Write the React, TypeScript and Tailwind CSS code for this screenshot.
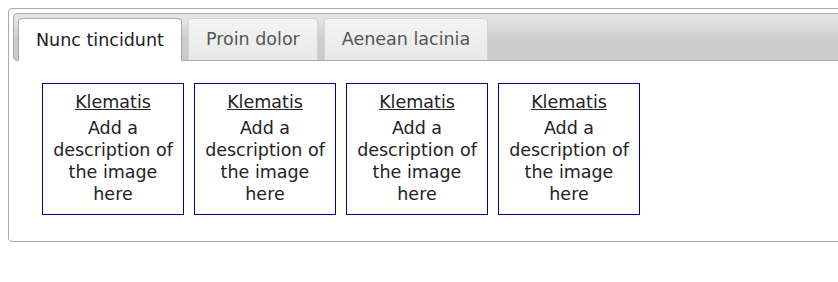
const tabs = ["Nunc tincidunt", "Proin dolor", "Aenean lacinia"]

function Card() {
  return (
    <div className="w-[142px] h-[132px] border border-[#00009c] flex flex-col items-center pt-[7px] text-center leading-[22px] text-[17.5px] text-[#222]">
      <a className="underline text-[#222] leading-[22px] mb-[4px]">Klematis</a>
      <p className="px-[6px]">Add a description of the image here</p>
    </div>
  )
}

export default function App() {
  return (
    <div className="w-[838px] h-[282px] overflow-hidden bg-white" style={{ fontFamily: '"DejaVu Sans", Verdana, sans-serif' }}>
      <div className="ml-[8px] mt-[8px] w-[900px] h-[234px] border border-[#aaaaaa] rounded-[4px] p-[4px]">
        <div className="h-[48px] border border-[#aaaaaa] rounded-[4px] bg-gradient-to-b from-[#e4e4e4] from-10% to-[#cccccc] to-55% flex items-end gap-[6px] pl-[4px]">
          {tabs.map((t, i) => (
            <div
              key={t}
              className={
                i === 0
                  ? "h-[43px] -mb-px px-[17px] flex items-center rounded-t-[4px] border border-b-0 border-[#aaaaaa] bg-white text-[#212121] text-[17.5px]"
                  : "h-[42px] px-[17px] flex items-center rounded-t-[4px] border border-b-0 border-[#d3d3d3] bg-gradient-to-b from-[#f4f4f4] to-[#e8e8e8] text-[#555555] text-[17.5px]"
              }
            >
              {t}
            </div>
          ))}
        </div>
        <div className="flex gap-[10px] pl-[29px] pt-[22px]">
          <Card />
          <Card />
          <Card />
          <Card />
        </div>
      </div>
    </div>
  )
}
